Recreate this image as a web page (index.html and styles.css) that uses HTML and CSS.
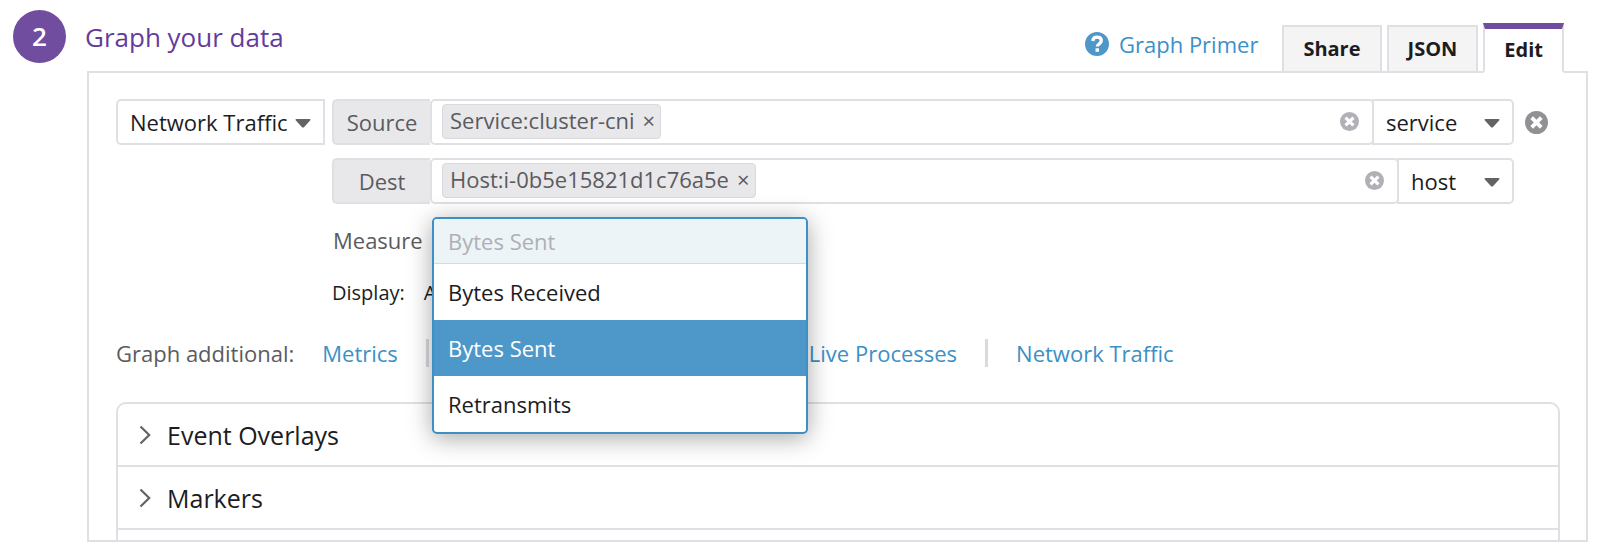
FILE: index.html
```html
<!DOCTYPE html>
<html lang="en">
<head>
<meta charset="utf-8">
<title>Graph your data</title>
<link rel="stylesheet" href="styles.css">
</head>
<body>
<svg class="sprite" aria-hidden="true">
  <symbol id="caret" viewBox="0 0 16 9"><path d="M1.5 0h13q1.6.2.6 1.6L9.2 8Q8 9.2 6.800 8L.9 1.600Q-.1.200 1.500 0z" fill="currentColor"/></symbol>
  <symbol id="remove" viewBox="0 0 24 24"><circle cx="12" cy="12" r="12" fill="currentColor"/><path d="M7 7l10 10M17 7l-10 10" stroke="#fff" stroke-width="4"/></symbol>
  <symbol id="chevron" viewBox="0 0 12 20"><path d="M1.500 1.500L10.200 10l-8.700 8.500" fill="none" stroke="currentColor" stroke-width="2.200"/></symbol>
</svg>
<main class="step">
  <div class="step-number">2</div>
  <section class="step-body">
    <header class="step-header">
      <h1 class="title">Graph your data</h1>
      <a class="primer" href="#primer">
        <svg class="help-icon" viewBox="0 0 24 24" aria-hidden="true"><circle cx="12" cy="12" r="12" fill="#4e97c9"/><path d="M7.800 9C8 6.400 9.600 5.200 12.100 5.200c2.400 0 4.200 1.300 4.200 3.600 0 3.100-4 2.900-4 5.800" fill="none" stroke="#fff" stroke-width="3.300"/><rect x="10.500" y="16.200" width="3.500" height="3.500" rx=".5" fill="#fff"/></svg>
        Graph Primer
      </a>
      <nav class="tabs">
        <button class="tab" type="button">Share</button>
        <button class="tab" type="button">JSON</button>
        <button class="tab tab-active" type="button">Edit</button>
      </nav>
    </header>
    <div class="panel">
      <form class="query">
        <div class="select type-select">
          <select aria-label="Data source"><option>Network Traffic</option></select>
          <svg class="caret" aria-hidden="true"><use href="#caret"/></svg>
        </div>
        <div class="query-rows">
          <div class="row">
            <div class="group">
              <label class="addon" for="source">Source</label>
              <div class="field">
                <span class="chip">Service:cluster-cni<button class="chip-x" type="button" aria-label="Remove Service:cluster-cni">×</button></span>
                <input class="field-input" id="source" type="text">
                <button class="clear" type="button" aria-label="Clear source"><svg class="clear-icon"><use href="#remove"/></svg></button>
              </div>
              <div class="select source-select">
                <select aria-label="Group source by"><option>service</option></select>
                <svg class="caret" aria-hidden="true"><use href="#caret"/></svg>
              </div>
            </div>
            <button class="remove" type="button" aria-label="Remove query"><svg class="remove-icon"><use href="#remove"/></svg></button>
          </div>
          <div class="row">
            <div class="group">
              <label class="addon" for="dest">Dest</label>
              <div class="field">
                <span class="chip">Host:i-0b5e15821d1c76a5e<button class="chip-x" type="button" aria-label="Remove Host:i-0b5e15821d1c76a5e">×</button></span>
                <input class="field-input" id="dest" type="text">
                <button class="clear" type="button" aria-label="Clear destination"><svg class="clear-icon"><use href="#remove"/></svg></button>
              </div>
              <div class="select dest-select">
                <select aria-label="Group destination by"><option>host</option></select>
                <svg class="caret" aria-hidden="true"><use href="#caret"/></svg>
              </div>
            </div>
          </div>
          <div class="measure">
            <label class="measure-label" for="measure">Measure</label>
            <div class="combo">
              <div class="menu">
                <input class="menu-input" id="measure" type="text" placeholder="Bytes Sent">
                <ul class="options" role="listbox" aria-label="Measure">
                  <li class="option" role="option">Bytes Received</li>
                  <li class="option option-active" role="option" aria-selected="true">Bytes Sent</li>
                  <li class="option" role="option">Retransmits</li>
                </ul>
              </div>
            </div>
          </div>
          <div class="display"><span>Display:</span><span>A</span></div>
        </div>
      </form>
      <div class="additional">
        <span class="additional-label">Graph additional:</span>
        <a class="link" href="#metrics">Metrics</a>
        <span class="divider"></span>
        <a class="link link-processes" href="#processes">Live Processes</a>
        <span class="divider"></span>
        <a class="link" href="#network">Network Traffic</a>
      </div>
      <div class="accordion">
        <button class="section" type="button"><svg class="chevron" aria-hidden="true"><use href="#chevron"/></svg>Event Overlays</button>
        <button class="section" type="button"><svg class="chevron" aria-hidden="true"><use href="#chevron"/></svg>Markers</button>
        <div class="section-stub"></div>
      </div>
    </div>
  </section>
</main>
</body>
</html>
```
FILE: styles.css
```css
* { box-sizing: border-box; }
body {
  margin: 0;
  background: #fff;
  color: #1c1c22;
  font: 22px/30px "Open Sans", "Noto Sans", sans-serif;
}
button, input, select { font: inherit; color: inherit; }
button { border: 0; padding: 0; background: none; cursor: pointer; }
a { color: #3c90c6; text-decoration: none; }
.sprite { display: none; }

.step { display: flex; gap: 21px; padding: 10px 12px 16px 13px; }
.step-number {
  flex: none;
  width: 53px;
  height: 53px;
  border-radius: 50%;
  background: #714da0;
  color: #fff;
  font-size: 26px;
  font-weight: 600;
  line-height: 53px;
  text-align: center;
}
.step-body { flex: 1; min-width: 0; }
.step-header { display: flex; align-items: flex-end; height: 61px; padding-right: 24px; }
.title {
  flex: 1;
  align-self: flex-start;
  margin: 9px 0 0 -2px;
  color: #633c9b;
  font-size: 26px;
  font-weight: 400;
  line-height: 36px;
}
.primer { display: flex; align-items: center; gap: 10px; margin: 0 24px 12px 0; }
.help-icon { width: 24px; height: 24px; }
.tabs { display: flex; align-items: flex-end; gap: 5px; }
.tab {
  position: relative;
  height: 48px;
  margin-bottom: -2px;
  padding: 0 19px;
  border: 2px solid #e0e0e4;
  background: #f4f4f5;
  font-size: 20px;
  font-weight: 700;
}
.tab-active {
  height: 50px;
  border-top: 6px solid #714da0;
  border-bottom-color: #fff;
  background: #fff;
}

.panel { padding: 26px 26px 0 27px; border: 2px solid #e0e0e4; }
.query { display: flex; gap: 7px; }
.query-rows { flex: 1; min-width: 0; }
.select {
  position: relative;
  flex: none;
  height: 46px;
  border: 2px solid #e0e0e4;
  background: #fff;
}
.select select {
  width: 100%;
  height: 100%;
  padding: 0 12px;
  border: 0;
  background: none;
  appearance: none;
}
.caret {
  position: absolute;
  right: 12px;
  top: 18px;
  width: 16px;
  height: 9px;
  color: #636365;
  pointer-events: none;
}
.type-select { width: 209px; border-radius: 5px 0 0 5px; }
.source-select, .dest-select { margin-left: -2px; border-radius: 0 5px 5px 0; }
.source-select { width: 142px; }
.dest-select { width: 117px; }
.row { display: flex; align-items: center; padding-right: 46px; margin-bottom: 13px; }
.group { display: flex; flex: 1; min-width: 0; }
.addon {
  flex: none;
  width: 98px;
  height: 46px;
  border: 2px solid #e0e0e4;
  border-right: 0;
  border-radius: 5px 0 0 5px;
  background: #e8e8ea;
  color: #5b5b5f;
  line-height: 42px;
  text-align: center;
}
.field {
  display: flex;
  flex: 1;
  min-width: 0;
  height: 46px;
  padding: 3px 13px 5px 10px;
  border: 2px solid #e0e0e4;
  border-radius: 5px;
  background: #fff;
}
.chip {
  display: flex;
  flex: none;
  align-items: center;
  gap: 8px;
  height: 35px;
  padding: 0 5px 3px 7px;
  border: 1px solid #d9d9de;
  border-radius: 4px;
  background: #e8e8ea;
  color: #5b5b5f;
}
.chip-x { line-height: 30px; }
.field-input { flex: 1; min-width: 0; border: 0; outline: 0; background: none; }
.clear { display: flex; align-items: center; }
.clear-icon { width: 19px; height: 19px; color: #b1b0b6; }
.remove { display: flex; margin: 0 -34px 0 11px; }
.remove-icon { width: 23px; height: 23px; color: #919095; }

.measure { display: flex; align-items: center; height: 46px; margin-bottom: 15px; }
.measure-label { flex: none; width: 100px; padding-left: 1px; color: #5b5b5f; }
.combo { position: relative; align-self: stretch; width: 376px; }
.menu {
  position: absolute;
  z-index: 1;
  top: 0;
  left: 0;
  width: 100%;
  overflow: hidden;
  border: 2px solid #3c90c6;
  border-radius: 5px;
  background: #fff;
  box-shadow: 0 4px 24px rgba(0, 0, 0, .35);
}
.menu-input {
  display: block;
  width: 100%;
  height: 45px;
  padding: 0 14px;
  border: 0;
  border-bottom: 1px solid #d5d9e0;
  outline: 0;
  background: #ecf4f8;
}
.menu-input::placeholder { color: #b0afb5; opacity: 1; }
.options { margin: 0; padding: 0; list-style: none; }
.option { height: 56px; padding: 0 14px; line-height: 56px; }
.option-active { background: #4e97c9; color: #fff; }
.display { display: flex; gap: 19px; font-size: 20px; }

.additional { display: flex; align-items: center; gap: 28px; margin-top: 30px; white-space: nowrap; }
.additional-label { color: #5b5b5f; }
.divider { width: 3px; height: 28px; background: #dad9df; }
.link-processes { margin-left: 352px; }

.accordion {
  margin-top: 34px;
  border: 2px solid #e0e0e4;
  border-bottom: 0;
  border-radius: 10px 10px 0 0;
}
.section {
  display: flex;
  align-items: center;
  gap: 16px;
  width: 100%;
  height: 63px;
  padding: 0 21px;
  border-bottom: 2px solid #e0e0e4;
  font-size: 25px;
}
.chevron { width: 12px; height: 20px; color: #636365; }
.section-stub { height: 10px; }
```
